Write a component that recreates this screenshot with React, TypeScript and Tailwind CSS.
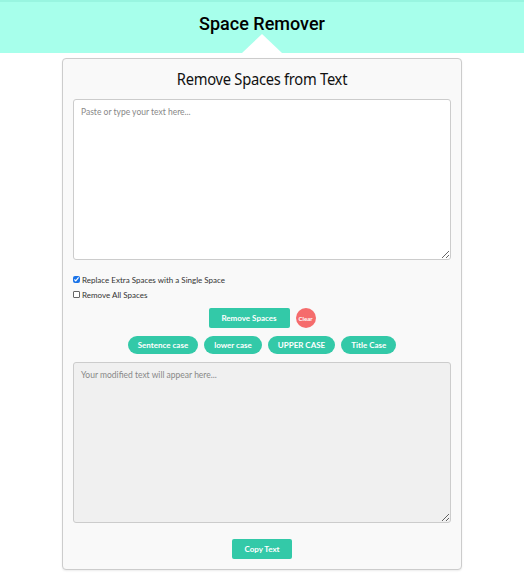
import React, { useState } from 'react';

export default function App() {
  const [input, setInput] = useState('');
  const [output, setOutput] = useState('');
  const [singleSpace, setSingleSpace] = useState(true);
  const [removeAll, setRemoveAll] = useState(false);

  const removeSpaces = () => {
    let text = input;
    if (removeAll) text = text.replace(/\s+/g, '');
    else if (singleSpace) text = text.replace(/\s+/g, ' ').trim();
    setOutput(text);
  };

  const toSentence = (s: string) =>
    s.toLowerCase().replace(/(^\s*\w|[.!?]\s*\w)/g, (c) => c.toUpperCase());
  const toTitle = (s: string) =>
    s.toLowerCase().replace(/\b\w/g, (c) => c.toUpperCase());

  const caseButtons = [
    { label: 'Sentence case', fn: toSentence },
    { label: 'lower case', fn: (s: string) => s.toLowerCase() },
    { label: 'UPPER CASE', fn: (s: string) => s.toUpperCase() },
    { label: 'Title Case', fn: toTitle },
  ];

  return (
    <div className="min-h-[574px] bg-white font-['Lato',sans-serif]">
      {/* Header */}
      <header className="relative h-[53px] bg-[#a7ffeb] border-t-2 border-[#98f5e0] flex items-center justify-center">
        <h1 className="font-['Roboto',sans-serif] font-medium text-[18px] text-black -mt-[8px]">
          Space Remover
        </h1>
        <div className="absolute bottom-0 left-1/2 -translate-x-1/2 w-0 h-0 border-l-[20px] border-r-[20px] border-b-[19px] border-l-transparent border-r-transparent border-b-white" />
      </header>

      <div className="flex justify-center pt-[5px]">
        <div className="w-[400px] bg-[#f9f9f9] border border-[#cccccc] rounded-[4px] px-[10px] pt-[9px] pb-[10px] shadow-[0_1px_2px_rgba(0,0,0,0.08)]">
          <h2 className="text-center text-[16px] text-[#111] font-['Noto_Sans',sans-serif] tracking-[-0.3px] scale-x-[0.92] leading-[22px]">
            Remove Spaces from Text
          </h2>

          <textarea
            value={input}
            onChange={(e) => setInput(e.target.value)}
            placeholder="Paste or type your text here..."
            className="mt-[9px] block w-full h-[161px] bg-white border border-[#cccccc] rounded-[3px] px-[7px] py-[6px] text-[8.5px] text-[#333] placeholder:text-[#888] outline-none"
          />

          <div className="mt-[14px] flex flex-col gap-[4px] text-[8px] text-[#333]">
            <label className="flex items-center gap-[2px] h-[11px]">
              <input
                type="checkbox"
                checked={singleSpace}
                onChange={(e) => setSingleSpace(e.target.checked)}
                className="w-[7px] h-[7px] m-0 accent-[#1a73e8]"
              />
              Replace Extra Spaces with a Single Space
            </label>
            <label className="flex items-center gap-[2px] h-[11px]">
              <input
                type="checkbox"
                checked={removeAll}
                onChange={(e) => setRemoveAll(e.target.checked)}
                className="w-[7px] h-[7px] m-0 appearance-none border border-[#666] rounded-[1px] bg-white"
              />
              Remove All Spaces
            </label>
          </div>

          <div className="mt-[8px] flex justify-center items-center gap-[6px]">
            <button
              onClick={removeSpaces}
              className="w-[81px] h-[20px] bg-[#33c9a8] text-white text-[8px] font-bold rounded-[2px]"
            >
              Remove Spaces
            </button>
            <button
              onClick={() => {
                setInput('');
                setOutput('');
              }}
              className="w-[20px] h-[20px] rounded-full bg-[#f56c6c] text-white text-[6px] font-bold flex items-center justify-center"
            >
              Clear
            </button>
          </div>

          <div className="mt-[8px] flex justify-center gap-[6px]">
            {caseButtons.map((b) => (
              <button
                key={b.label}
                onClick={() => setOutput(b.fn(output || input))}
                className="h-[18px] px-[10px] rounded-full bg-[#33c9a8] text-white text-[8px] font-bold"
              >
                {b.label}
              </button>
            ))}
          </div>

          <textarea
            value={output}
            readOnly
            placeholder="Your modified text will appear here..."
            className="mt-[8px] block w-full h-[161px] bg-[#f0f0f0] border border-[#cccccc] rounded-[3px] px-[7px] py-[6px] text-[8.5px] text-[#333] placeholder:text-[#888] outline-none"
          />

          <div className="mt-[16px] flex justify-center">
            <button
              onClick={() => navigator.clipboard?.writeText(output)}
              className="w-[60px] h-[20px] bg-[#33c9a8] text-white text-[8px] font-bold rounded-[2px]"
            >
              Copy Text
            </button>
          </div>
        </div>
      </div>
    </div>
  );
}
